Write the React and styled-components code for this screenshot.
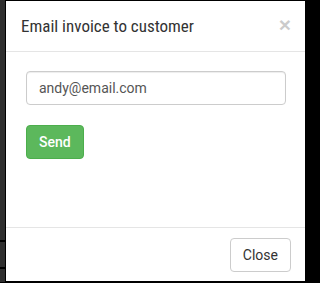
import React from "react";
import styled, { createGlobalStyle } from "styled-components";

const Global = createGlobalStyle`
  html, body { margin: 0; padding: 0; background: #000; }
  body { font-family: Roboto, "Helvetica Neue", Arial, sans-serif; }
  * { box-sizing: border-box; }
`;

const Backdrop = styled.div`
  display: flex;
  width: 307px;
  height: 283px;
  background: #000;
  padding: 0 1px 1px 0;
`;

const BehindStrip = styled.div`
  width: 5px;
  flex: none;
  background:
    linear-gradient(#000, #000) 0 240px / 100% 2px no-repeat,
    linear-gradient(#000, #000) 0 267px / 100% 2px no-repeat,
    #2f2f2f;
`;

const Modal = styled.div`
  flex: 1;
  display: flex;
  flex-direction: column;
  background: #fff;
  border: 1px solid #000;
`;

const Header = styled.div`
  display: flex;
  align-items: center;
  justify-content: space-between;
  padding: 15px 14px 15px 15px;
  border-bottom: 1px solid #e5e5e5;
`;

const Title = styled.h4`
  margin: 0;
  font-family: "Roboto Condensed", Roboto, sans-serif;
  font-size: 17px;
  font-weight: 400;
  line-height: 20px;
  color: #333;
`;

const CloseX = styled.button`
  border: 0;
  background: transparent;
  padding: 0;
  margin-top: -4px;
  font-family: Arial, "Liberation Sans", sans-serif;
  font-size: 21px;
  font-weight: 700;
  line-height: 1;
  color: #000;
  opacity: 0.2;
  cursor: pointer;
`;

const Body = styled.div`
  flex: 1;
  padding: 19px 19px 20px 20px;
`;

const Input = styled.input`
  display: block;
  width: 100%;
  height: 34px;
  padding: 6px 12px;
  margin: 0 0 20px;
  font-family: inherit;
  font-size: 14px;
  color: #555;
  background: #fff;
  border: 1px solid #ccc;
  border-radius: 4px;
  box-shadow: inset 0 1px 1px rgba(0, 0, 0, 0.075);
  outline: none;
`;

const Button = styled.button`
  display: inline-block;
  height: 34px;
  padding: 6px 12px;
  font-family: inherit;
  font-size: 14px;
  line-height: 20px;
  font-weight: ${(p) => (p.$primary ? 500 : 400)};
  color: ${(p) => (p.$primary ? "#fff" : "#333")};
  background: ${(p) => (p.$primary ? "#5cb85c" : "#fff")};
  border: 1px solid ${(p) => (p.$primary ? "#4cae4c" : "#ccc")};
  border-radius: 4px;
  cursor: pointer;
`;

const Footer = styled.div`
  display: flex;
  justify-content: flex-end;
  padding: 10px 14px 9px 15px;
  border-top: 1px solid #e5e5e5;
`;

export default function App() {
  return (
    <>
      <Global />
      <Backdrop>
        <BehindStrip />
        <Modal>
          <Header>
            <Title>Email invoice to customer</Title>
            <CloseX aria-label="Close">×</CloseX>
          </Header>
          <Body>
            <Input type="email" defaultValue="andy@email.com" />
            <Button $primary>Send</Button>
          </Body>
          <Footer>
            <Button>Close</Button>
          </Footer>
        </Modal>
      </Backdrop>
    </>
  );
}
